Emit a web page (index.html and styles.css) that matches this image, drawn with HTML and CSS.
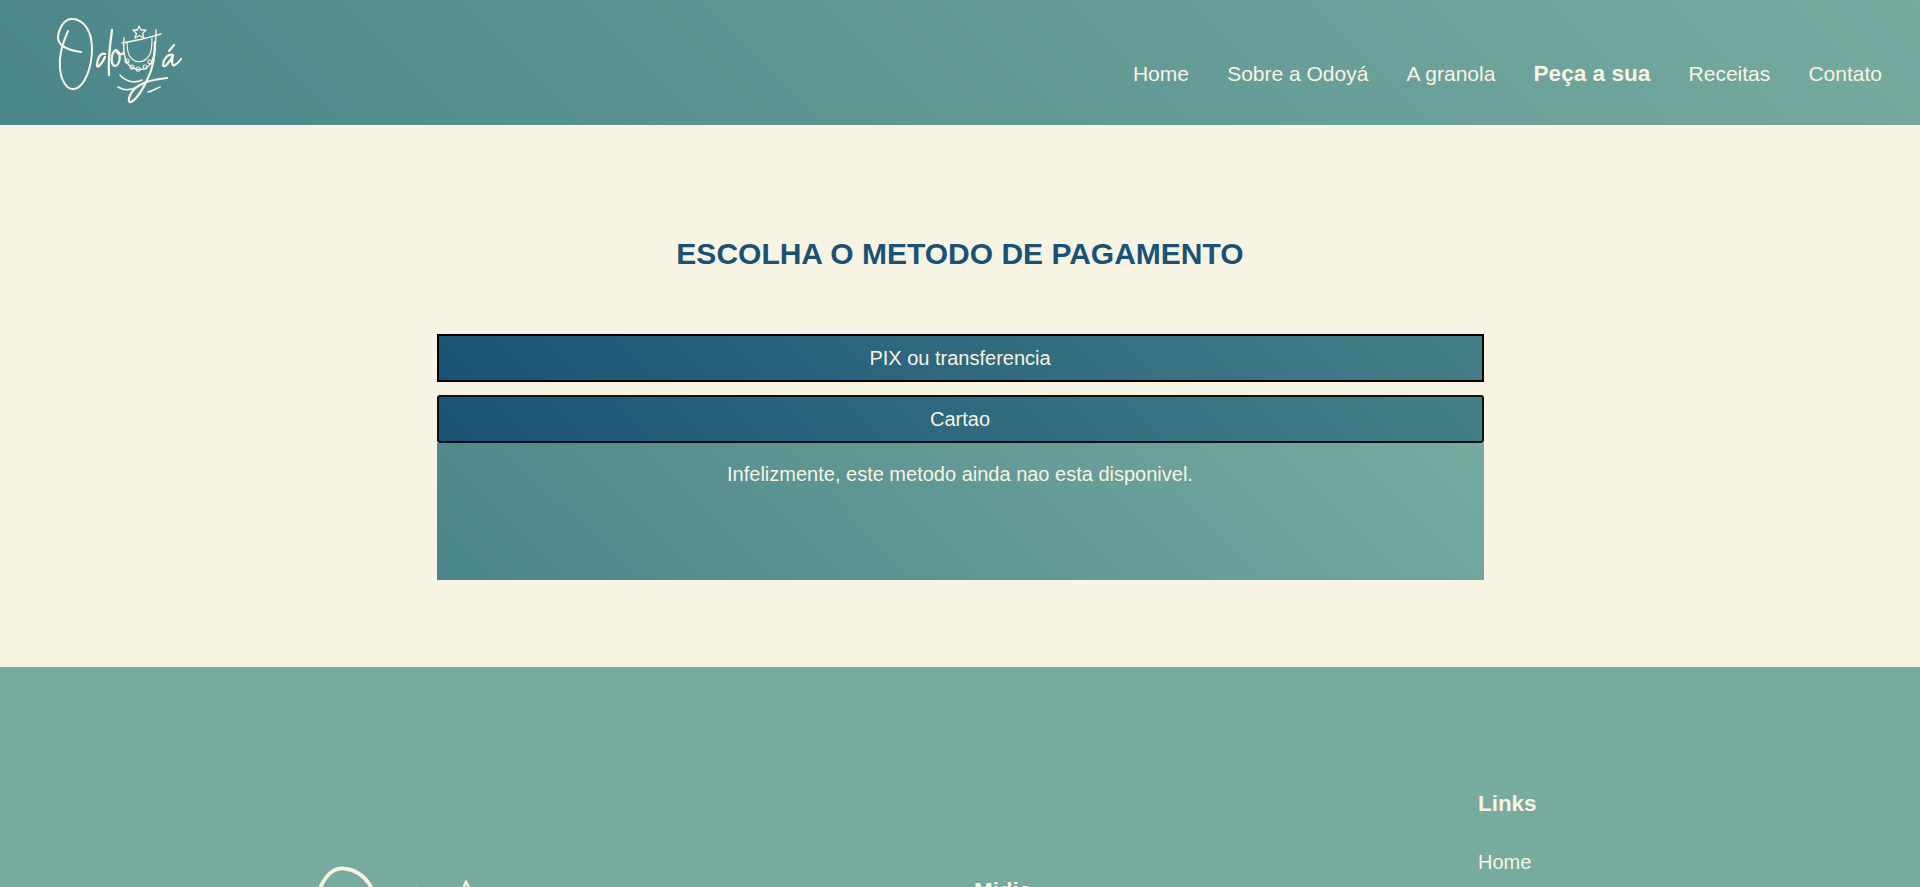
FILE: index.html
```html
<!DOCTYPE html>
<html lang="pt-BR">
<head>
<meta charset="utf-8">
<title>Odoyá - Pagamento</title>
<link rel="stylesheet" href="styles.css">
</head>
<body>
<svg class="defs" width="0" height="0" aria-hidden="true">
  <symbol id="logo" viewBox="50 10 140 100">
    <g fill="none" stroke="#f7f4e3" stroke-linecap="round" stroke-linejoin="round">
      <path stroke-width="2" d="M68 31C62 44 59 58 60 68C61 81 67 90 74 89C84 88 92 68 92 49C92 31 84 20 73 19C66 18 60 25 58 36C57 46 67 50 81 52"/>
      <path stroke-width="2.300" d="M105 54C100 52 97 60 97 65C97 69 102 64 105 57M112 30C110 44 108 60 109 75"/>
      <path stroke-width="2.300" d="M116 50C111 52 110 65 115 66C120 66 122 52 116 50C118 55 121 55 124 53"/>
      <path stroke-width="1.300" d="M139 26L141 30L146 30L142.500 33.500L144 38L139.500 35.500L135 38L136.500 33.500L133 30L137.500 30Z"/>
      <path stroke-width="1.400" d="M122 43C134 41 148 38 161 34M124 38C123 50 124 59 128 64C135 72 146 71 151 63C155 56 156 46 156 30"/>
      <path stroke-width="1.200" d="M127 42C127 50 128 56 132 59C138 64 146 62 150 54C152 50 152 45 152 38"/>
      <path stroke-width="2.200" d="M155 42C155 58 152 70 148 78C144 88 136 100 131 102C126 103 130 90 140 85C146 81 158 79 167 78"/>
      <path stroke-width="1.600" d="M120 75C125 81 134 84 142 80M118 87C124 91 131 90 137 87M148 92C153 91 157 88 160 87"/>
      <circle stroke-width="1.100" cx="127" cy="61" r="2"/>
      <circle stroke-width="1.100" cx="132" cy="67" r="2"/>
      <circle stroke-width="1.100" cx="138" cy="69" r="2"/>
      <circle stroke-width="1.100" cx="145" cy="67" r="2"/>
      <circle stroke-width="1.100" cx="150" cy="62" r="2"/>
      <path stroke-width="2.200" d="M173 55C167 53 163 61 163 65C164 69 170 62 173 55C172 60 171 67 175 65C177 64 179 62 181 59M169 51L174 45"/>
    </g>
  </symbol>
</svg>

<header class="site-header">
  <a class="brand" href="#" aria-label="Odoyá"><svg class="brand-logo"><use href="#logo"/></svg></a>
  <nav class="main-nav">
    <a href="#">Home</a>
    <a href="#">Sobre a Odoyá</a>
    <a href="#">A granola</a>
    <a href="#" class="is-active">Peça a sua</a>
    <a href="#">Receitas</a>
    <a href="#">Contato</a>
  </nav>
</header>

<main class="payment">
  <h1 class="payment-title">ESCOLHA O METODO DE PAGAMENTO</h1>
  <div class="methods">
    <button class="method method-first" type="button">PIX ou transferencia</button>
    <button class="method method-open" type="button">Cartao</button>
    <div class="method-panel">
      <p>Infelizmente, este metodo ainda nao esta disponivel.</p>
    </div>
  </div>
</main>

<footer class="site-footer">
  <div class="footer-brand"><svg class="footer-logo"><use href="#logo"/></svg></div>
  <div class="footer-col">
    <h3>Midia</h3>
    <ul class="footer-social">
      <li><a href="#">Instagram</a></li>
      <li><a href="#">Facebook</a></li>
    </ul>
  </div>
  <div class="footer-col">
    <h3>Links</h3>
    <ul>
      <li><a href="#">Home</a></li>
      <li><a href="#">Sobre a Odoyá</a></li>
      <li><a href="#">A granola</a></li>
      <li><a href="#">Peça a sua</a></li>
      <li><a href="#">Receitas</a></li>
      <li><a href="#">Contato</a></li>
    </ul>
  </div>
</footer>
</body>
</html>
```

FILE: styles.css
```css
* {
  box-sizing: border-box;
}

html,
body {
  margin: 0;
  padding: 0;
}

body {
  background: #f7f4e3;
  color: #f7f4e3;
  font-family: "Liberation Sans", Arial, sans-serif;
}

a {
  color: inherit;
  text-decoration: none;
}

.defs {
  display: block;
  height: 0;
}

.site-header {
  display: flex;
  justify-content: space-between;
  height: 125px;
  padding: 10px 38px 0 50px;
  background: linear-gradient(45deg, #4a8589, #77aba0);
}

.brand {
  display: block;
}

.brand-logo {
  display: block;
  width: 140px;
  height: 100px;
}

.main-nav {
  display: flex;
  align-items: center;
  gap: 38.2px;
  padding-top: 13px;
  height: 100%;
  font-size: 21px;
}

.main-nav .is-active {
  font-size: 22.6px;
  font-weight: 700;
}

.payment {
  display: flex;
  flex-direction: column;
  align-items: center;
  padding: 112px 0 87px;
}

.payment-title {
  margin: 0 0 64px;
  color: #1a5276;
  font-size: 30px;
  line-height: 33px;
  font-weight: 700;
}

.methods {
  display: flex;
  flex-direction: column;
  width: 1047px;
}

.method {
  display: block;
  width: 100%;
  height: 48px;
  padding: 0;
  background: linear-gradient(45deg, #1a5276, #458088);
  color: #f7f4e3;
  font-family: inherit;
  font-size: 20px;
}

.method-first {
  margin-bottom: 13px;
  border: 2px solid #000;
  border-radius: 0;
}

.method-open {
  border: 2px solid #111;
  border-radius: 3px;
}

.method-panel {
  height: 137px;
  padding-top: 20px;
  background: linear-gradient(45deg, #4a8589, #77aba0);
  text-align: center;
  font-size: 20px;
  line-height: 23px;
}

.method-panel p {
  margin: 0;
}

.site-footer {
  display: grid;
  grid-template-columns: 672px 504px 1fr;
  align-items: center;
  padding: 124px 0 60px 302px;
  background: #77aba0;
}

.footer-brand {
  padding-top: 8px;
}

.footer-logo {
  display: block;
  width: 258px;
  height: 184px;
}

.footer-col h3 {
  margin: 0 0 34px;
  font-size: 22.4px;
  line-height: 26px;
  font-weight: 700;
}

.footer-col ul {
  display: flex;
  flex-direction: column;
  gap: 20px;
  margin: 0;
  padding: 0;
  list-style: none;
  font-size: 20px;
  line-height: 23px;
}

.footer-col .footer-social {
  gap: 18px;
}
```
